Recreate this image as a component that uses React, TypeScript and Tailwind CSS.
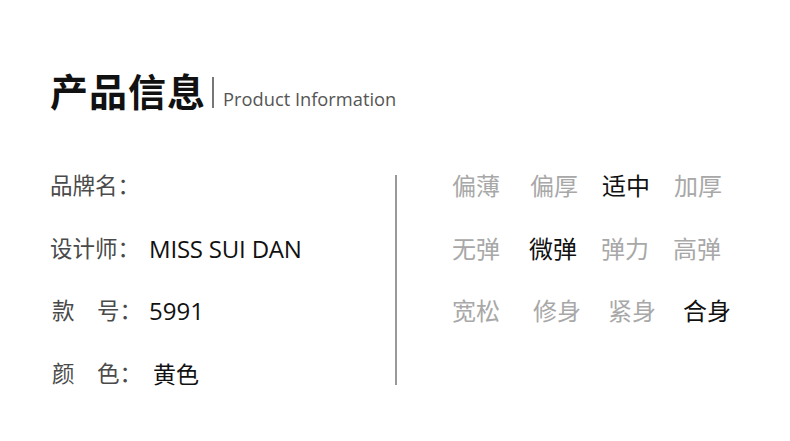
import React from "react";

const font = { fontFamily: '"Open Sans", "Noto Sans CJK SC", sans-serif' };

type Opt = { t: string; on?: boolean; ml: string };

const rows: Opt[][] = [
  [
    { t: "偏薄", ml: "ml-0" },
    { t: "偏厚", ml: "ml-[30px]" },
    { t: "适中", on: true, ml: "ml-[24px]" },
    { t: "加厚", ml: "ml-[24px]" },
  ],
  [
    { t: "无弹", ml: "ml-0" },
    { t: "微弹", on: true, ml: "ml-[29px]" },
    { t: "弹力", ml: "ml-[24px]" },
    { t: "高弹", ml: "ml-[24px]" },
  ],
  [
    { t: "宽松", ml: "ml-0" },
    { t: "修身", ml: "ml-[33px]" },
    { t: "紧身", ml: "ml-[27px]" },
    { t: "合身", on: true, ml: "ml-[27px]" },
  ],
];

export default function App() {
  return (
    <div
      className="w-[790px] h-[441px] bg-white overflow-hidden pl-[50px]"
      style={font}
    >
      <div className="pt-[72px] flex items-end h-[110px]">
        <div className="text-[38px] leading-[38px] font-bold text-[#111] tracking-[1px]">
          产品信息
        </div>
        <div className="ml-[6px] mb-[2px] w-[2px] h-[31px] bg-[#777]" />
        <div className="ml-[9px] text-[18.3px] leading-[20px] text-[#555] mb-[1px]">
          Product Information
        </div>
      </div>
      <div className="mt-[45px] flex">
        <div className="w-[345px] flex flex-col text-[22.5px]">
          <div className="h-[62.5px] flex items-center">
            <span className="text-[#4a4a4a] w-[99px]">品牌名：</span>
          </div>
          <div className="h-[62.5px] flex items-center">
            <span className="text-[#4a4a4a] w-[99px]">设计师：</span>
            <span className="text-[#111] text-[24px] tracking-[-0.2px]">MISS SUI DAN</span>
          </div>
          <div className="h-[62.5px] flex items-center">
            <span className="text-[#4a4a4a] w-[99px] pl-[2px]">款　号：</span>
            <span className="text-[#111] text-[24px]">5991</span>
          </div>
          <div className="h-[62.5px] flex items-center">
            <span className="text-[#4a4a4a] w-[103px] pl-[2px]">颜　色：</span>
            <span className="text-[#111] text-[23px]">黄色</span>
          </div>
        </div>
        <div className="mt-[20px] w-[2px] h-[210px] bg-[#999]" />
        <div className="ml-[55px] flex flex-col text-[24px]">
          {rows.map((r, i) => (
            <div key={i} className="h-[62.5px] flex items-center">
              {r.map((o) => (
                <span
                  key={o.t}
                  className={`${o.ml} w-[48px] whitespace-nowrap ${o.on ? "text-[#111]" : "text-[#a8a8a8]"}`}
                >
                  {o.t}
                </span>
              ))}
            </div>
          ))}
        </div>
      </div>
    </div>
  );
}
